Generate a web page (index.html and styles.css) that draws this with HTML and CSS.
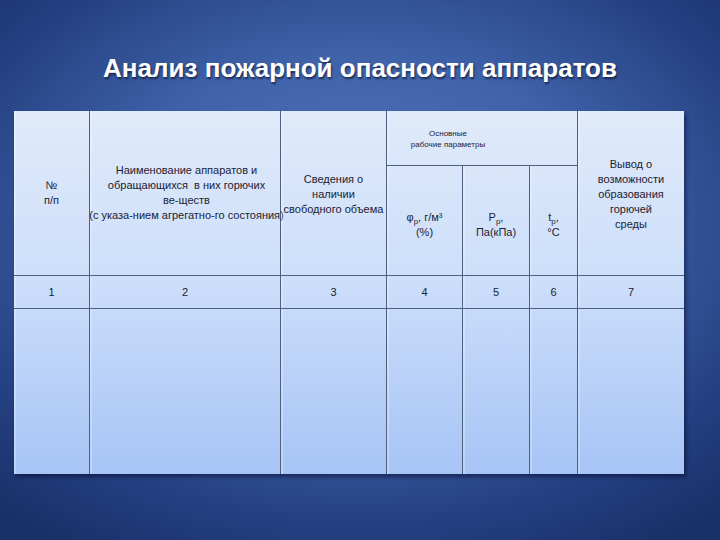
FILE: index.html
```html
<!DOCTYPE html>
<html lang="ru">
<head>
<meta charset="utf-8">
<link rel="stylesheet" href="styles.css">
</head>
<body>
<div class="slide">
  <h1 class="title">Анализ пожарной опасности аппаратов</h1>
  <div class="table">
    <div class="cell c-num"><span>№<br>п/п</span></div>
    <div class="cell c-name"><span>Наименование аппаратов и<br>обращающихся&nbsp; в них горючих<br>ве-ществ<br>(с указа-нием агрегатно-го состояния)</span></div>
    <div class="cell c-info"><span>Сведения о<br>наличии<br>свободного объема</span></div>
    <div class="cell c-main"><span>Основные<br>рабочие параметры</span></div>
    <div class="cell c-out"><span>Вывод о<br>возможности<br>образования<br>горючей<br>среды</span></div>
    <div class="cell c-sub"><span>φ<sub>р</sub>, г/м³<br>(%)</span></div>
    <div class="cell c-sub"><span>Р<sub>р</sub>,<br>Па(кПа)</span></div>
    <div class="cell c-sub"><span>t<sub>р</sub>,<br>°С</span></div>
    <div class="cell n"><span>1</span></div>
    <div class="cell n"><span>2</span></div>
    <div class="cell n"><span>3</span></div>
    <div class="cell n"><span>4</span></div>
    <div class="cell n"><span>5</span></div>
    <div class="cell n"><span>6</span></div>
    <div class="cell n last-col"><span>7</span></div>
    <div class="cell e last-row"></div>
    <div class="cell e last-row"></div>
    <div class="cell e last-row"></div>
    <div class="cell e last-row"></div>
    <div class="cell e last-row"></div>
    <div class="cell e last-row"></div>
    <div class="cell e last-row last-col"></div>
  </div>
</div>
</body>
</html>
```
FILE: styles.css
```css
html, body {
  margin: 0;
  padding: 0;
}
body {
  width: 720px;
  height: 540px;
  overflow: hidden;
}
.slide {
  width: 720px;
  height: 540px;
  box-sizing: border-box;
  padding-top: 53px;
  background: radial-gradient(ellipse 75% 70% at 50% 42%, #5477bd 0%, #3f62a9 45%, #243f80 80%, #1a3068 100%);
  display: flex;
  flex-direction: column;
}
.title {
  margin: 0 0 28px 0;
  height: 30px;
  line-height: 30px;
  font-family: "Liberation Sans", Arial, sans-serif;
  font-weight: bold;
  font-size: 26px;
  color: #ffffff;
  text-align: center;
  text-shadow: 1px 2px 2px rgba(0, 0, 20, 0.55);
}
.table {
  margin-left: 14px;
  width: 670px;
  display: grid;
  grid-template-columns: 76px 191px 106px 76px 67px 48px 106px;
  grid-template-rows: 55px 110px 33px 165px;
  background: linear-gradient(180deg, #e0eafa 0%, #cddffa 45%, #a7c4f6 100%);
  box-shadow: 2px 3px 4px rgba(0, 0, 30, 0.45);
  font-family: "Liberation Sans", Arial, sans-serif;
  font-size: 11px;
  color: #1c2234;
}
.cell {
  box-sizing: border-box;
  border-right: 1px solid #4f5f80;
  border-bottom: 1px solid #4f5f80;
  box-shadow: inset 2px 0 0 rgba(255, 255, 255, 0.25);
  display: flex;
  align-items: center;
  justify-content: center;
  text-align: center;
  line-height: 15px;
  white-space: nowrap;
}
.c-num { grid-column: 1; grid-row: 1 / 3; }
.c-name { grid-column: 2; grid-row: 1 / 3; padding-left: 3px; }
.c-info { grid-column: 3; grid-row: 1 / 3; padding-top: 2px; }
.c-main {
  grid-column: 4 / 7;
  grid-row: 1;
  font-size: 8px;
  line-height: 11px;
  padding-right: 68px;
  padding-top: 2px;
}
.c-out { grid-column: 7; grid-row: 1 / 3; border-right: none; padding-top: 2px; }
.c-sub { grid-row: 2; padding-top: 8px; }
.c-sub sub { font-size: 8px; vertical-align: -3px; line-height: 0; }
.n { grid-row: 3; }
.e { grid-row: 4; }
.last-col { border-right: none; }
.last-row { border-bottom: none; }
```
